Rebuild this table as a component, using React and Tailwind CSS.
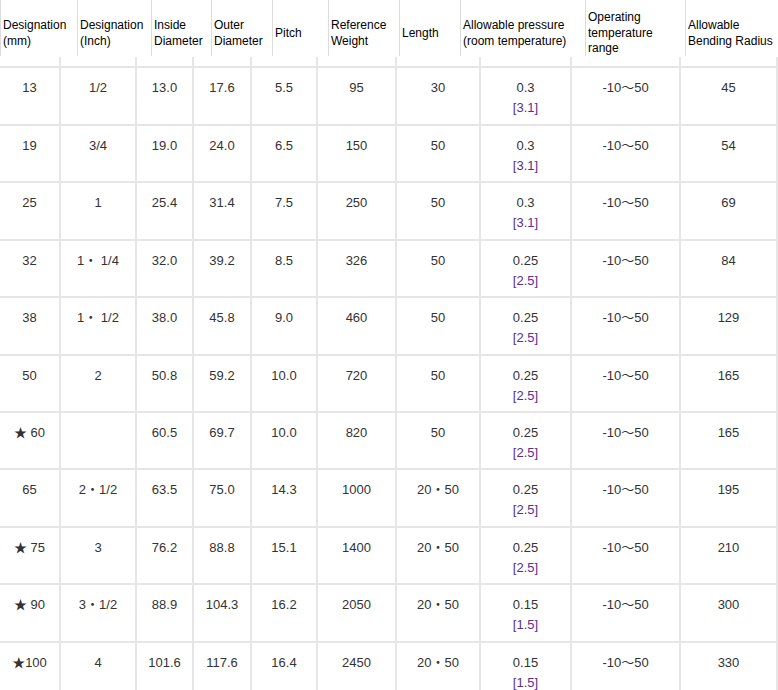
const headers = [
  { w: 'w-[77px]', lines: ['Designation', '(mm)'] },
  { w: 'w-[74px]', lines: ['Designation', '(Inch)'] },
  { w: 'w-[60px]', lines: ['Inside', 'Diameter'] },
  { w: 'w-[61px]', lines: ['Outer', 'Diameter'] },
  { w: 'w-[56px]', lines: ['Pitch'] },
  { w: 'w-[71px]', lines: ['Reference', 'Weight'] },
  { w: 'w-[61px]', lines: ['Length'] },
  { w: 'w-[125px]', lines: ['Allowable pressure', '(room temperature)'] },
  { w: 'w-[100px]', lines: ['Operating', 'temperature', 'range'] },
  { w: 'w-[93px]', lines: ['Allowable', 'Bending Radius'] },
];

const rows = [
  ['13', '1/2', '13.0', '17.6', '5.5', '95', '30', ['0.3', '[3.1]'], '-10～50', '45'],
  ['19', '3/4', '19.0', '24.0', '6.5', '150', '50', ['0.3', '[3.1]'], '-10～50', '54'],
  ['25', '1', '25.4', '31.4', '7.5', '250', '50', ['0.3', '[3.1]'], '-10～50', '69'],
  ['32', '1・ 1/4', '32.0', '39.2', '8.5', '326', '50', ['0.25', '[2.5]'], '-10～50', '84'],
  ['38', '1・ 1/2', '38.0', '45.8', '9.0', '460', '50', ['0.25', '[2.5]'], '-10～50', '129'],
  ['50', '2', '50.8', '59.2', '10.0', '720', '50', ['0.25', '[2.5]'], '-10～50', '165'],
  ['★ 60', '', '60.5', '69.7', '10.0', '820', '50', ['0.25', '[2.5]'], '-10～50', '165'],
  ['65', '2・1/2', '63.5', '75.0', '14.3', '1000', '20・50', ['0.25', '[2.5]'], '-10～50', '195'],
  ['★ 75', '3', '76.2', '88.8', '15.1', '1400', '20・50', ['0.25', '[2.5]'], '-10～50', '210'],
  ['★ 90', '3・1/2', '88.9', '104.3', '16.2', '2050', '20・50', ['0.15', '[1.5]'], '-10～50', '300'],
  ['★100', '4', '101.6', '117.6', '16.4', '2450', '20・50', ['0.15', '[1.5]'], '-10～50', '330'],
];

// row heights alternate to land on the reference's grid lines
const rowHeights = ['h-[58px]', 'h-[57px]', 'h-[58px]', 'h-[57px]', 'h-[58px]', 'h-[57px]', 'h-[57px]', 'h-[58px]', 'h-[57px]', 'h-[58px]', 'h-[58px]'];

const cols = 'grid grid-cols-[59px_76px_57px_58px_66px_79px_84px_91px_109px_99px]';

function Cell({ value, first, last, height }) {
  return (
    <div
      className={`${height} border-t-2 border-[#e6e6e6] pt-[10px] text-center leading-[20px] ${first ? '' : 'border-l-2'} ${last ? 'border-r-2' : ''}`}
    >
      {Array.isArray(value) ? (
        <>
          <div>{value[0]}</div>
          <div className="text-[#5c2d8f]">{value[1]}</div>
        </>
      ) : (
        value
      )}
    </div>
  );
}

export default function App() {
  return (
    <div className="w-[778px] bg-white font-['Liberation_Sans','Noto_Sans_CJK_JP',sans-serif]">
      <div className="flex h-[57px] text-[12px] leading-[15.5px] text-black">
        {headers.map((h, i) => (
          <div key={i} className={`${h.w} flex h-[56px] items-center border-l border-[#dcdcdc] pl-[2px] pt-[11px]`}>
            <div>
              {h.lines.map((l, j) => (
                <div key={j} className="whitespace-nowrap">{l}</div>
              ))}
            </div>
          </div>
        ))}
      </div>

      <div className={`${cols} text-[13px] text-[#333]`}>
        {headers.map((_, i) => (
          <div
            key={i}
            className={`h-[9px] border-[#e6e6e6] ${i === 0 ? '' : 'border-l-2'} ${i === 9 ? 'border-r-2' : ''}`}
          />
        ))}
        {rows.map((r, ri) =>
          r.map((v, ci) => (
            <Cell key={`${ri}-${ci}`} value={v} first={ci === 0} last={ci === 9} height={rowHeights[ri]} />
          ))
        )}
      </div>
    </div>
  );
}
